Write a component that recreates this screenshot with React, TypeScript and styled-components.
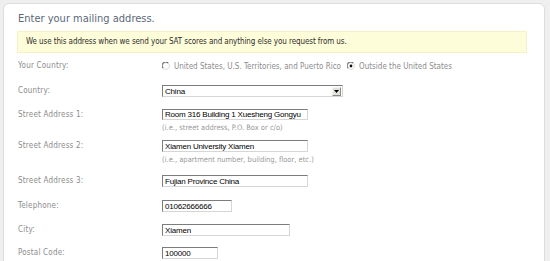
import React from "react";
import styled, { createGlobalStyle } from "styled-components";

const Global = createGlobalStyle`
  html, body { margin: 0; padding: 0; background: #efefef; overflow: hidden; }
  * { box-sizing: border-box; }
`;

const Panel = styled.div`
  margin: 3px 0 0 3px;
  width: 542px;
  min-height: 300px;
  background: #ffffff;
  border: 1px solid #dddddd;
  border-radius: 6px;
  padding: 7px 17px 0 13px;
  font-family: "DejaVu Sans Condensed", "DejaVu Sans", sans-serif;
`;

const Title = styled.h1`
  margin: 0 0 0 1px;
  font-size: 11px;
  font-weight: normal;
  letter-spacing: 0px;
  color: #5a6877;
  line-height: 16px;
`;

const Notice = styled.div`
  margin-top: 4px;
  height: 22px;
  background: #fefdda;
  border: 1px solid #f4f0c8;
  padding: 0 8px;
  font-size: 8px;
  line-height: 20px;
  color: #2e2e2e;
  letter-spacing: -0.1px;
`;

const Form = styled.div`
  display: grid;
  grid-template-columns: 144px 1fr;
  padding-left: 1px;
`;

const Label = styled.div<{ $h: number }>`
  height: ${(p) => p.$h}px;
  padding-top: 7px;
  font-size: 8px;
  line-height: 12px;
  color: #8c8c8c;
  letter-spacing: 0.2px;
`;

const Field = styled.div<{ $h: number }>`
  height: ${(p) => p.$h}px;
  padding-top: 7px;
  display: flex;
  flex-direction: column;
  align-items: flex-start;
`;

const RadioRow = styled.div`
  display: flex;
  align-items: center;
  height: 12px;
  font-size: 8px;
  color: #8c8c8c;
  letter-spacing: 0px;
`;

const RadioOption = styled.label`
  display: flex;
  align-items: center;
  gap: 4px;
  margin-right: 6px;
`;

const TextBox = styled.input<{ $w: number }>`
  width: ${(p) => p.$w}px;
  height: 12px;
  margin: 0;
  padding: 0 0 0 2px;
  border-style: solid;
  border-width: 1px;
  border-color: #7c7c7c #d6d6d6 #d6d6d6 #7c7c7c;
  background: #ffffff;
  font-family: "Liberation Sans", Arial, sans-serif;
  font-size: 8px;
  letter-spacing: -0.2px;
  color: #000;
  outline: none;
`;

const SelectBox = styled.div`
  width: 181px;
  height: 12px;
  display: flex;
  align-items: center;
  justify-content: space-between;
  border-style: solid;
  border-width: 1px;
  border-color: #7c7c7c #d6d6d6 #d6d6d6 #7c7c7c;
  padding-left: 2px;
  font-family: "Liberation Sans", Arial, sans-serif;
  font-size: 8px;
  letter-spacing: -0.2px;
  color: #000;
`;

const Arrow = styled.div`
  width: 9px;
  height: 9px;
  margin-right: 1px;
  background: #e4e2dc;
  border: 1px solid;
  border-color: #f4f4f4 #8a8a8a #8a8a8a #f4f4f4;
  display: flex;
  align-items: center;
  justify-content: center;
`;

const Hint = styled.div`
  margin-top: 2px;
  font-size: 7.5px;
  line-height: 11px;
  color: #9a9a9a;
  letter-spacing: 0px;
`;

const Radio = ({ checked }: { checked?: boolean }) => (
  <svg width="8" height="8" viewBox="0 0 8 8">
    <circle cx="4" cy="4" r="3.5" fill="#fff" stroke="#dcdcdc" />
    <path d="M1.2 6.2 A3.3 3.3 0 0 1 6.2 1.2" fill="none" stroke="#6e6e6e" strokeWidth="1.1" />
    {checked && <circle cx="4" cy="4" r="1.4" fill="#111" />}
  </svg>
);

type Row = { label: string; h: number; value: string; w: number; hint?: string };

const rows: Row[] = [
  { label: "Street Address 1:", h: 31, value: "Room 316 Building 1 Xuesheng Gongyu", w: 146, hint: "(i.e., street address, P.O. Box or c/o)" },
  { label: "Street Address 2:", h: 35, value: "Xiamen University Xiamen", w: 146, hint: "(i.e., apartment number, building, floor, etc.)" },
  { label: "Street Address 3:", h: 25, value: "Fujian Province China", w: 146 },
  { label: "Telephone:", h: 24, value: "01062666666", w: 70 },
  { label: "City:", h: 23, value: "Xiamen", w: 128 },
  { label: "Postal Code:", h: 24, value: "100000", w: 56 },
];

export default function App() {
  return (
    <>
      <Global />
      <Panel>
        <Title>Enter your mailing address.</Title>
        <Notice>We use this address when we send your SAT scores and anything else you request from us.</Notice>
        <Form>
          <Label $h={25}>Your Country:</Label>
          <Field $h={25}>
            <RadioRow>
              <RadioOption>
                <Radio />
                United States, U.S. Territories, and Puerto Rico
              </RadioOption>
              <RadioOption>
                <Radio checked />
                Outside the United States
              </RadioOption>
            </RadioRow>
          </Field>
          <Label $h={24}>Country:</Label>
          <Field $h={24}>
            <SelectBox>
              China
              <Arrow>
                <svg width="5" height="3" viewBox="0 0 5 3">
                  <path d="M0 0 H5 L2.5 3 Z" fill="#000" />
                </svg>
              </Arrow>
            </SelectBox>
          </Field>
          {rows.map((r) => (
            <React.Fragment key={r.label}>
              <Label $h={r.h}>{r.label}</Label>
              <Field $h={r.h}>
                <TextBox $w={r.w} value={r.value} readOnly />
                {r.hint && <Hint>{r.hint}</Hint>}
              </Field>
            </React.Fragment>
          ))}
        </Form>
      </Panel>
    </>
  );
}
